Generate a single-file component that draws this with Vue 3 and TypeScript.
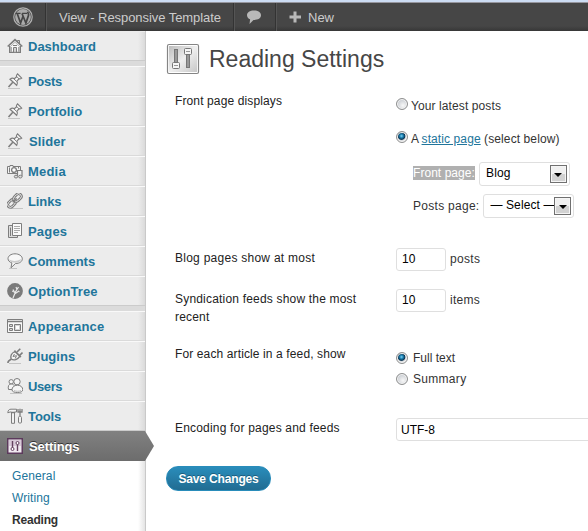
<script setup lang="ts">
import { ref } from 'vue'

interface MenuItem {
  label: string
  icon: string
  spacing: number
  indent?: number
}

const groups: MenuItem[][] = [
  [{ label: 'Dashboard', icon: 'home', spacing: 0 }],
  [
    { label: 'Posts', icon: 'pin', spacing: -0.3 },
    { label: 'Portfolio', icon: 'pin', spacing: 0.1 },
    { label: 'Slider', icon: 'pin', spacing: 0.1, indent: 1 },
    { label: 'Media', icon: 'media', spacing: 0.2 },
    { label: 'Links', icon: 'link', spacing: -0.1 },
    { label: 'Pages', icon: 'pages', spacing: 0.2 },
    { label: 'Comments', icon: 'comment', spacing: 0 },
    { label: 'OptionTree', icon: 'tree', spacing: 0.1 },
  ],
  [
    { label: 'Appearance', icon: 'appearance', spacing: 0.2 },
    { label: 'Plugins', icon: 'plug', spacing: 0.05 },
    { label: 'Users', icon: 'users', spacing: -0.4 },
    { label: 'Tools', icon: 'tools', spacing: -0.1 },
  ],
]

const submenu = ['General', 'Writing', 'Reading']
const current = 'Reading'

const frontDisplays = ref('page')
const feedShows = ref('full')
const postCount = ref('10')
const feedCount = ref('10')
const charset = ref('UTF-8')
</script>

<template>
  <div class="screen">
    <header class="bar">
      <a class="bar-item logo">
        <svg width="20" height="20" viewBox="0 0 20 20">
          <circle cx="10" cy="10" r="9.2" fill="none" stroke="#b0b0b0" stroke-width="1.2" />
          <circle cx="10" cy="10" r="7.9" fill="#aaa" />
          <path d="M2.8 6.4h4.800M9.100 6.400h5" stroke="#464646" stroke-width="1.1" />
          <path d="M4.200 6.500 7.600 16 10.200 8.800M9 6.500 12.900 16l2.600-7.600c.5-1.700-.8-2.400-.8-3.700" fill="none" stroke="#464646" stroke-width="1.7" />
        </svg>
      </a>
      <a class="bar-item site">View - Responsive Template</a>
      <a class="bar-item bubble">
        <svg width="16" height="16" viewBox="0 0 16 16">
          <path d="M8 1.500C3.900 1.500 1 3.400 1 6.200c0 1.900 1.300 3.300 3.100 4.100L3.500 15l4-4.100c4.400.1 7.500-1.800 7.500-4.700C15 3.400 12.100 1.500 8 1.500z" fill="#b8b8b8" />
        </svg>
      </a>
      <a class="bar-item new">
        <svg width="12" height="12" viewBox="0 0 12 12"><path d="M4.500.5h3v4H12v3H7.500v4h-3v-4H.5v-3h4z" fill="#b8b8b8" /></svg>
        <span>New</span>
      </a>
    </header>

    <div class="body">
      <nav class="side">
        <ul v-for="(group, g) in groups" :key="g" class="group">
          <li v-for="item in group" :key="item.label" class="item">
            <svg class="icon" width="16" height="16" viewBox="0 0 16 16" fill="none" stroke="#7d7d7d" stroke-width="1">
              <g v-if="item.icon === 'home'">
                <path d="M2.500 8v6.500h11V8M12.500 6.500V2.500h-2v2" fill="#e4e4e4" />
                <path d="M.7 8.500 8 1.600l7.300 6.900" stroke-width="1.600" />
                <path d="M3.500 8.500 8 4.300l4.500 4.200v5.500h-9z" fill="#fafafa" stroke="#a5a5a5" stroke-width=".8" />
                <path d="M6.500 14.500v-5h3v5M2 14.500h12M6 7.500h4" />
                <path d="M8 10v4.500M4.500 9v5M11.500 9v5" stroke="#aaa" />
              </g>
              <g v-else-if="item.icon === 'pin'">
                <path d="M1 15.500h12" stroke="#c4c4c4" />
                <path d="m1.500 14 4.300-4.800" stroke-width="1.600" />
                <path d="M3 6.200C4.800 4.900 6.300 5.100 7.300 5.700l2.300-1.900c-.4-1 .1-2.200.9-2.900l4.200 4.200c-.8.700-1.900 1-2.800.7L9.900 8.200c.7 1.200.8 2.700-.2 4.100z" fill="#f6f6f6" stroke-width="1.200" />
                <path d="m7 6 2.700 2.500M9.900 3.700l2.200 2.200" />
              </g>
              <g v-else-if="item.icon === 'media'">
                <path d="M.5 3.500h2.500v-1h3v1h7.500v7H.5z" fill="#f3f3f3" />
                <circle cx="7" cy="7" r="2.400" fill="#fff" stroke-width="1.300" />
                <path d="M2.500 4.500v5M11.500 4v1.500" />
                <path d="M10.500 13.500v-6h4.500v6" fill="#f3f3f3" stroke-width="1.200" />
                <ellipse cx="9" cy="13.600" rx="1.700" ry="1.400" fill="#ddd" />
                <ellipse cx="13.300" cy="13.600" rx="1.700" ry="1.400" fill="#ddd" />
              </g>
              <g v-else-if="item.icon === 'link'">
                <path d="M4 15.500h12" stroke="#c4c4c4" />
                <g transform="rotate(-45 7.500 7.500)">
                  <rect x="-1" y="4.800" width="8.500" height="5.400" rx="2.700" stroke-width="2.800" />
                  <rect x="-1" y="4.800" width="8.500" height="5.400" rx="2.700" stroke="#eee" stroke-width=".9" />
                  <rect x="7.500" y="4.800" width="8.500" height="5.400" rx="2.700" stroke-width="2.800" />
                  <rect x="7.500" y="4.800" width="8.500" height="5.400" rx="2.700" stroke="#eee" stroke-width=".9" />
                  <path d="M5 7.500h5.500" stroke-width="1.500" />
                </g>
              </g>
              <g v-else-if="item.icon === 'pages'">
                <path d="M5.500 2.500h-4v12h9v-2" fill="#ddd" />
                <path d="M3.500 4.500v8.500" />
                <path d="M5.500.5h9v12h-9z" fill="#fafafa" />
                <path d="M7 3.500h6M7 5.500h6M7 7.500h6M7 9.500h4" stroke="#aaa" />
              </g>
              <g v-else-if="item.icon === 'comment'">
                <path d="M2 15.500h8" stroke="#c4c4c4" />
                <path d="M8 .8C4 .8 1 2.900 1 5.700c0 1.900 1.500 3.400 3.900 4.200L4 14.800 8.500 10.500c4 0 6.800-1.900 6.800-4.700S12 .8 8 .8z" fill="#f8f8f8" />
                <path d="M2 6.500C6 8.700 10 8.300 14.500 6c-.8 2.400-3 3.700-6.300 3.700S2.900 8.600 2 6.500z" fill="#ccc" stroke="none" />
              </g>
              <g v-else-if="item.icon === 'tree'" stroke="#eaeaea">
                <circle cx="8" cy="8" r="7.900" fill="#7b7b7b" stroke="none" />
                <path d="M6 15 8.700 8.500 11.500 4M7.500 11l4.500-3M8 10 6 6.500M10 6.500 9 4" stroke-width="1.200" />
                <path d="m5 8 2 1M11 8.200l1.500.5" />
              </g>
              <g v-else-if="item.icon === 'appearance'">
                <path d="M.5 1.500h15v13H.5z" fill="#f8f8f8" />
                <path d="M.5 3.500h15" stroke-width="1.500" />
                <path d="M2.500 6.500h3v2h-3zM2.500 10.500h3v2h-3zM7.500 6.500h6v6h-6z" fill="#d5d5d5" />
                <path d="M9 8h3v3H9z" fill="#fff" stroke="none" />
              </g>
              <g v-else-if="item.icon === 'plug'">
                <path d="M2 15.500h12" stroke="#c4c4c4" />
                <path d="M.8 14.800c.4-2.400 1.700-2.600 3.300-3.500" stroke-width="1.800" />
                <path d="m10 4 3.300-3.300M12.500 7.500l3-3" stroke-width="1.600" />
                <path d="m7.500 2.500 6.500 6.500M7.800 3.500C4 5.500 3.300 8.300 4.200 11c2.800 1.700 6.500.6 8.500-2.700z" fill="#f5f5f5" stroke-width="1.300" />
                <path d="m7.500 6-1.500 2.500 3.500-.8-1.300 2.800" />
              </g>
              <g v-else-if="item.icon === 'users'">
                <path d="M3 15.500h12" stroke="#c4c4c4" />
                <circle cx="4.200" cy="3.800" r="2.200" fill="#f5f5f5" />
                <path d="M5 11.500H1.500C.6 8 2 6 4 6s2.500.5 3 1.500" fill="#f5f5f5" />
                <circle cx="10" cy="3.700" r="3.200" fill="#f5f5f5" />
                <path d="M10.500 7.200C7 7.200 5 9.300 5 11.800c0 2 2.500 2.700 5.500 2.700s5.300-.9 5.300-2.700c0-2.500-2-4.600-5.300-4.600z" fill="#f5f5f5" />
                <path d="M7 12.500c2 1 5 1 7 0" stroke="#bbb" />
              </g>
              <g v-else>
                <path d="M.8 4.800C1 2.300 2 1.200 4 1.200h5.500v2.800H7.500v11.300h-3V4H3z" fill="#f2f2f2" />
                <path d="M4.500 4.500h3M13 .8V8M11 1v3h4V1" stroke-width="1.300" />
                <rect x="11.500" y="8.500" width="3" height="6.500" rx="1" fill="#f2f2f2" />
              </g>
            </svg>
            <span
              class="name"
              :style="{ letterSpacing: item.spacing + 'px', marginLeft: (item.indent ?? 0) + 'px' }"
            >{{ item.label }}</span>
          </li>
        </ul>
        <div class="item active">
          <svg class="icon" width="16" height="16" viewBox="0 0 16 16">
            <path d="M.75.75h14.500v14.500H.75z" fill="#f1e9f1" stroke="#5c3a5c" stroke-width="1.500" />
            <path d="M2 2h12v6H2z" fill="#d9c9d9" />
            <path d="M5.500 3v7M10.500 6v7" stroke="#64405f" stroke-width="1.400" />
            <circle cx="5.500" cy="11" r="1.500" fill="#fff" stroke="#64405f" />
            <circle cx="10.500" cy="5" r="1.500" fill="#fff" stroke="#64405f" />
          </svg>
          <span class="name">Settings</span>
          <svg class="pointer" width="9" height="30" viewBox="0 0 9 30">
            <defs>
              <linearGradient id="tip" x2="0" y2="1"><stop stop-color="#808080" /><stop offset="1" stop-color="#6d6d6d" /></linearGradient>
            </defs>
            <path d="M0 0 9 15 0 30z" fill="url(#tip)" />
          </svg>
        </div>
        <ul class="submenu">
          <li v-for="entry in submenu" :key="entry" :class="{ current: entry === current }">{{ entry }}</li>
        </ul>
      </nav>

      <main class="content">
        <h1>
          <svg width="34" height="32" viewBox="0 0 34 32">
            <defs>
              <linearGradient id="plate" x2="1" y2="1"><stop stop-color="#bdbdbd" /><stop offset=".5" stop-color="#efefef" /><stop offset="1" stop-color="#c8c8c8" /></linearGradient>
            </defs>
            <rect x="1.500" y="1.500" width="31" height="29" rx="1.500" fill="#fff" stroke="#858585" stroke-width="1.200" />
            <rect x="3" y="3" width="28" height="26" fill="url(#plate)" />
            <rect x="8.500" y="6.500" width="3" height="14" fill="#999" stroke="#777" />
            <rect x="20.500" y="10.500" width="3" height="14" fill="#999" stroke="#777" />
            <rect x="6.500" y="19.500" width="7" height="6" rx="1" fill="#f6f6f6" stroke="#777" />
            <path d="M8 22.500h4" stroke="#999" />
            <rect x="18.500" y="5.500" width="7" height="6" rx="1" fill="#f6f6f6" stroke="#777" />
            <path d="M20 8.500h4" stroke="#999" />
          </svg>
          <span>Reading Settings</span>
        </h1>

        <form class="form" @submit.prevent>
          <div class="label">Front page displays</div>
          <div class="front">
            <label class="choice"><input v-model="frontDisplays" type="radio" value="posts" /><span class="tight">Your latest posts</span></label>
            <label class="choice"><input v-model="frontDisplays" type="radio" value="page" /><span class="tight">A&nbsp;<a>static page</a> (select below)</span></label>
            <div class="pick first">
              <span class="marked">Front page:</span>
              <div class="select"><span>Blog</span><i class="drop"></i></div>
            </div>
            <div class="pick last">
              <span>Posts page:</span>
              <div class="select second"><span>— Select —</span><i class="drop"></i></div>
            </div>
          </div>

          <div class="label wide">Blog pages show at most</div>
          <div class="amount"><input v-model="postCount" type="text" /><span>posts</span></div>

          <div class="label roomy">Syndication feeds show the most recent</div>
          <div class="amount"><input v-model="feedCount" type="text" /><span>items</span></div>

          <div class="label">For each article in a feed, show</div>
          <div class="feed">
            <label class="choice"><input v-model="feedShows" type="radio" value="full" /><span>Full text</span></label>
            <label class="choice"><input v-model="feedShows" type="radio" value="summary" /><span class="roomy">Summary</span></label>
          </div>

          <div class="label roomy">Encoding for pages and feeds</div>
          <div class="charset"><input v-model="charset" type="text" /></div>
        </form>
        <button class="save" type="button">Save Changes</button>
      </main>
    </div>
  </div>
</template>

<style>
body {
  background: #fff;
}
</style>

<style scoped>
.screen {
  width: 588px;
  height: 531px;
  overflow: hidden;
  display: flex;
  flex-direction: column;
  font: 12px/18px 'Liberation Sans', Arial, sans-serif;
  color: #333;
}
ul {
  list-style: none;
  margin: 0;
  padding: 0;
}
.bar {
  box-sizing: border-box;
  height: 31px;
  flex: none;
  display: flex;
  border-top: 2px solid #ccdcf3;
  box-shadow: inset 0 1px #96969e;
  background: linear-gradient(#464646 24px, #373737 29px);
  color: #ccc;
  font-size: 13px;
}
.bar-item {
  box-sizing: border-box;
  height: 28px;
  margin-top: 1px;
  display: flex;
  align-items: center;
  border-right: 1px solid #333;
  box-shadow: 1px 0 #555;
}
.logo {
  width: 46px;
  padding-left: 13px;
}
.site {
  width: 188px;
  padding: 1px 0 0 13px;
  letter-spacing: -0.06px;
}
.bubble {
  width: 42px;
  padding-left: 12px;
}
.new {
  padding-left: 13px;
  gap: 7px;
  border: 0;
  box-shadow: none;
}
.new span {
  padding-top: 1px;
}
.body {
  display: flex;
  flex: 1;
}
.side {
  box-sizing: border-box;
  width: 146px;
  flex: none;
  border-right: 1px solid #c9c9c9;
  background: linear-gradient(to right, #fff 138px, #e4e4e4 145px);
}
.group {
  background: linear-gradient(to right, #ececec 138px, #dadada 145px);
}
.group + .group {
  border-top: 5px solid #dbdbdb;
}
.item {
  box-sizing: border-box;
  height: 30px;
  padding-left: 7px;
  display: flex;
  align-items: center;
  border-top: 1px solid #f9f9f9;
  border-bottom: 1px solid #dadada;
  color: #21759b;
  font-size: 13px;
  font-weight: bold;
}
.group:first-child .item {
  border-top-color: #ececec;
}
.group .item:last-child {
  border-bottom-color: #cbcbcb;
}
.icon {
  flex: none;
  margin-right: 5px;
}
.name {
  padding-top: 2px;
}
.active {
  position: relative;
  border-top: 1px solid #808080;
  border-bottom: 1px solid #6d6d6d;
  background: linear-gradient(#808080, #6d6d6d);
  color: #fff;
  text-shadow: 0 -1px 0 #333;
}
.active .name {
  margin-left: 1px;
  letter-spacing: -0.1px;
}
.pointer {
  position: absolute;
  left: 145px;
  top: -1px;
}
.submenu {
  padding: 4px 0 0 12px;
  color: #21759b;
}
.submenu li {
  height: 22px;
  line-height: 22px;
  letter-spacing: 0.1px;
}
.submenu .current {
  color: #333;
  font-weight: bold;
  letter-spacing: -0.2px;
}
.content {
  flex: 1;
  min-width: 0;
  padding: 12px 0 0 20px;
}
h1 {
  margin: 0;
  height: 48px;
  display: flex;
  align-items: flex-start;
  gap: 9px;
  font-size: 23px;
  font-weight: normal;
  line-height: 32px;
  color: #464646;
}
.form {
  display: grid;
  grid-template-columns: 221px 1fr;
  grid-template-rows: 157px 41px 55px 74px 48px;
  padding-left: 9px;
}
.label {
  width: 190px;
  padding-top: 1px;
  color: #222;
  letter-spacing: 0.12px;
}
.label.wide {
  letter-spacing: 0.26px;
}
.label.roomy {
  letter-spacing: 0.19px;
}
.choice {
  display: flex;
  align-items: center;
  height: 21px;
  gap: 5px;
}
.choice .roomy {
  letter-spacing: 0.3px;
}
.choice input {
  appearance: none;
  box-sizing: border-box;
  width: 12px;
  height: 12px;
  margin: 0;
  border: 1px solid #8e8f8f;
  border-radius: 50%;
  background: radial-gradient(circle at 60% 65%, #f8f8f8, #c9cdd2 70%);
  box-shadow: inset 0 0 0 1px #f4f4f4;
}
.choice input:checked {
  background: radial-gradient(circle at 45% 40%, #7fd3f3 0, #1b7fb0 22%, #0c3552 42%, #c9cdd2 52%, #eee 62%);
}
.front .choice {
  height: 33px;
}
.front .choice:first-child {
  margin-top: -3px;
}
.front .choice input {
  margin-top: -1px;
}
.choice span {
  padding-top: 1px;
}
.front .choice .tight {
  margin-left: -2px;
  padding-top: 2px;
  letter-spacing: 0.1px;
}
.choice a {
  margin-left: -1px;
  color: #21759b;
  text-decoration: underline;
}
.pick {
  display: flex;
  align-items: center;
  height: 24px;
  margin: 8px 0 0 17px;
  gap: 4px;
}
.pick > span {
  line-height: 14px;
  letter-spacing: 0.05px;
}
.pick.first > span {
  margin-top: -2px;
}
.pick.last > span {
  letter-spacing: 0.28px;
}
.marked {
  background: #b0b0b0;
  color: #fff;
}
.select {
  box-sizing: border-box;
  width: 91px;
  height: 24px;
  border: 1px solid #dfdfdf;
  border-radius: 3px;
  display: flex;
  align-items: center;
  justify-content: space-between;
  padding: 0 2px 0 6px;
  color: #000;
  white-space: nowrap;
  line-height: 20px;
}
.select span {
  margin-top: -2px;
  letter-spacing: 0.2px;
}
.select.second span {
  width: 64px;
  letter-spacing: 0.1px;
}
.drop {
  box-sizing: border-box;
  flex: none;
  width: 17px;
  height: 18px;
  border: 1px solid #707070;
  box-shadow: inset 0 0 0 1px #f5f5f5;
  background: linear-gradient(#f0f0f0 50%, #d2d2d2 50%);
  display: flex;
  align-items: center;
  justify-content: center;
}
.drop::after {
  content: '';
  border: 4px solid transparent;
  border-top-color: #000;
  border-bottom: 0;
  margin-top: 2px;
}
.amount {
  display: flex;
  gap: 4px;
  line-height: 22px;
  letter-spacing: 0.3px;
}
input[type='text'] {
  box-sizing: border-box;
  width: 50px;
  height: 23px;
  margin: 0;
  padding: 0 4px 1px 5px;
  border: 1px solid #dfdfdf;
  border-radius: 3px;
  background: #fff;
  color: #000;
  font: 12px 'Liberation Sans', Arial, sans-serif;
}
.feed {
  padding-top: 3px;
}
.charset input[type='text'] {
  width: 210px;
  padding: 1px 4px 0 4px;
}
.save {
  display: block;
  width: 105px;
  height: 25px;
  margin: 0;
  padding: 0;
  border: 1px solid #298cba;
  border-radius: 12px;
  background: linear-gradient(#2a8dbb, #216c92);
  color: #fff;
  font: bold 12px 'Liberation Sans', Arial, sans-serif;
  letter-spacing: -0.15px;
  text-shadow: 0 -1px 0 rgba(0, 0, 0, 0.3);
}
</style>
